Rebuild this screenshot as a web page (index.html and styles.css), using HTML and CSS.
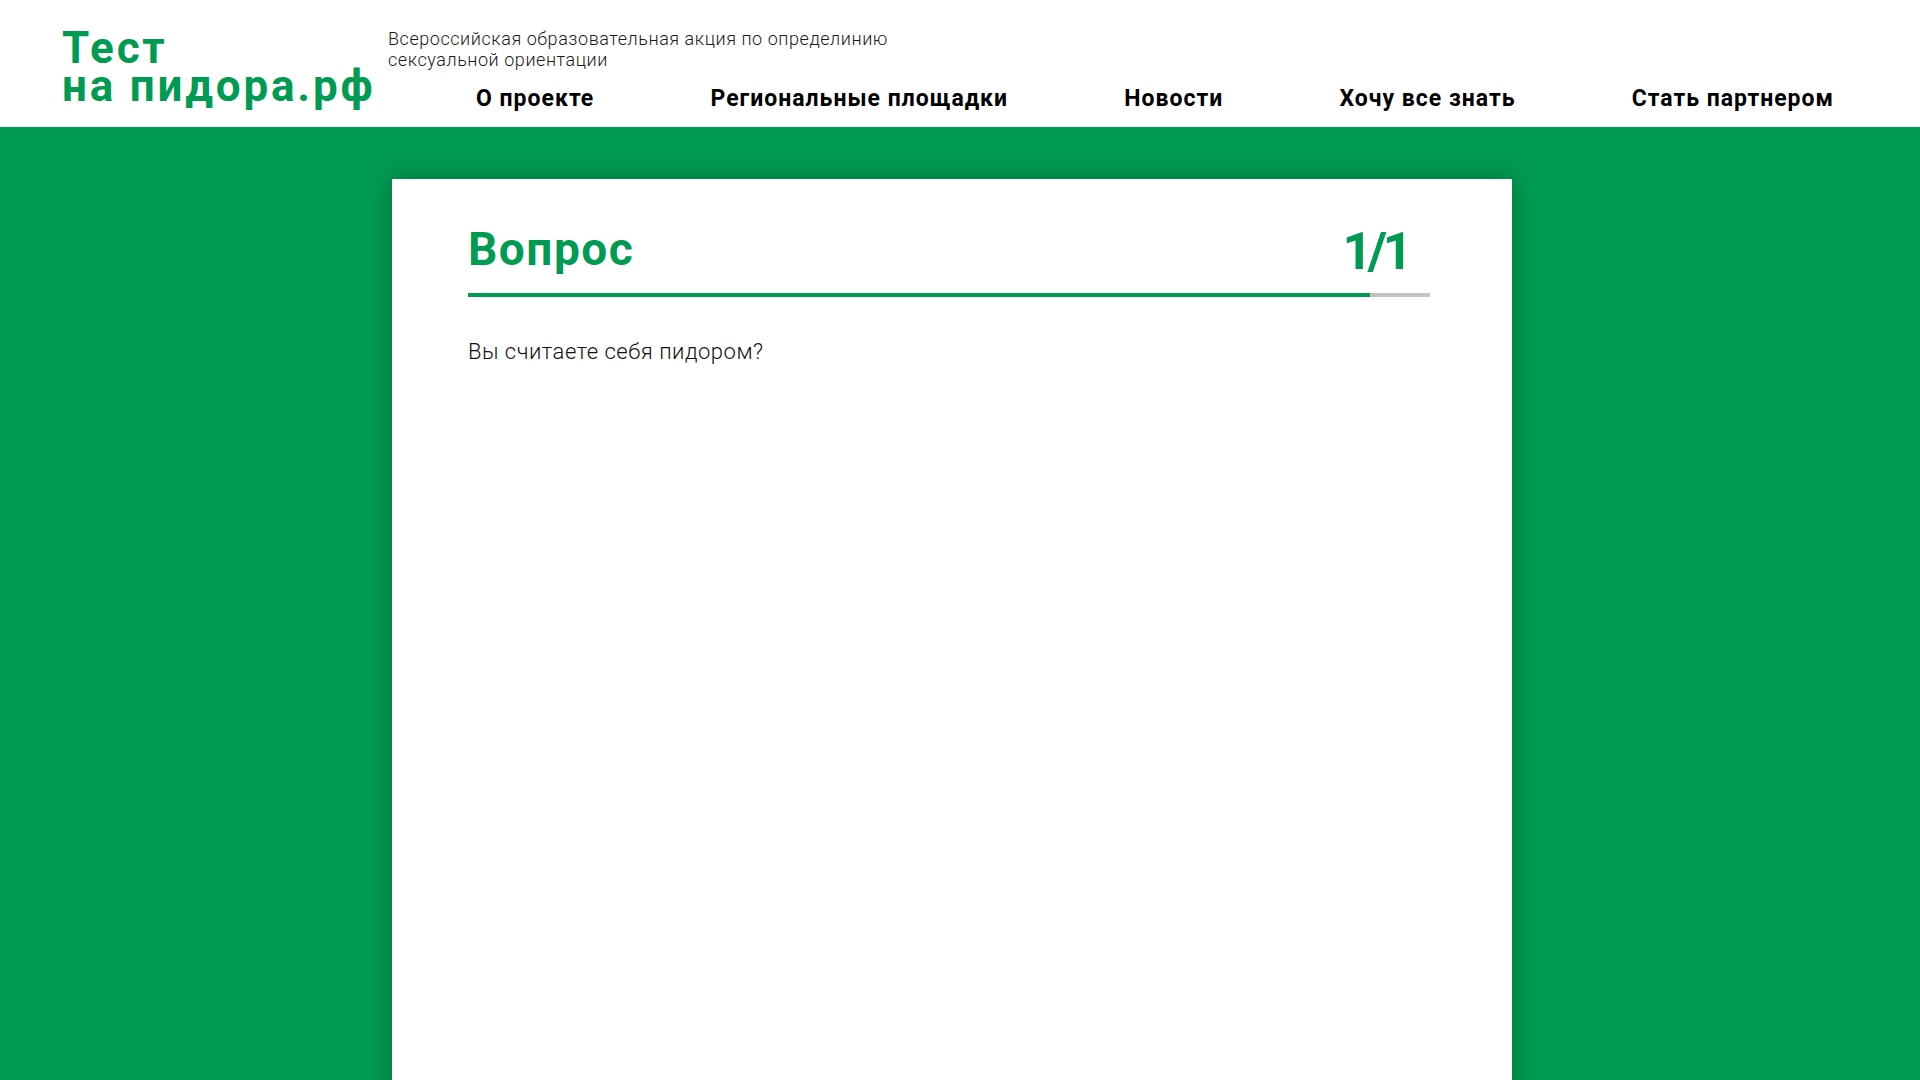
FILE: index.html
```html
<!DOCTYPE html>
<html lang="ru">
<head>
<meta charset="utf-8">
<title>Тест на пидора.рф</title>
<link rel="stylesheet" href="styles.css">
</head>
<body>
<header class="site-header">
  <a class="logo" href="#">Тест<br>на пидора.рф</a>
  <div class="header-right">
    <p class="tagline">Всероссийская образовательная акция по определинию<br>сексуальной ориентации</p>
    <nav class="nav">
      <a href="#">О проекте</a>
      <a href="#">Региональные площадки</a>
      <a href="#">Новости</a>
      <a href="#">Хочу все знать</a>
      <a href="#">Стать партнером</a>
    </nav>
  </div>
</header>
<main class="stage">
  <section class="card">
    <div class="card-head">
      <h1 class="card-title">Вопрос</h1>
      <div class="counter">1/1</div>
    </div>
    <div class="progress"><div class="progress-fill" style="width:93.8%"></div></div>
    <p class="question">Вы считаете себя пидором?</p>
  </section>
</main>
</body>
</html>
```
FILE: styles.css
```css
* { box-sizing: border-box; }
html, body { margin: 0; padding: 0; }
body {
  background: #009b52;
  font-family: Roboto, "Noto Sans", sans-serif;
  overflow: hidden;
  height: 1080px;
}
.site-header {
  background: #fff;
  height: 127px;
  display: flex;
  padding-right: 86px;
}
.logo {
  display: block;
  flex-shrink: 0;
  width: 388px;
  padding: 29px 0 0 62px;
  color: #009b52;
  font-weight: 700;
  font-size: 44px;
  line-height: 38px;
  text-decoration: none;
  white-space: nowrap;
  letter-spacing: 2.8px;
}
.header-right {
  flex: 1;
  display: flex;
  flex-direction: column;
}
.tagline {
  margin: 28px 0 0;
  font-size: 18px;
  line-height: 21px;
  font-weight: 300;
  letter-spacing: 0.55px;
  color: #1a1a1a;
}
.nav {
  margin: 17px 0 0 88px;
  display: flex;
  justify-content: space-between;
}
.nav a {
  color: #000;
  text-decoration: none;
  font-weight: 700;
  font-size: 23px;
  line-height: 24px;
  letter-spacing: 1px;
}
.stage {
  padding-top: 52px;
  padding-right: 16px;
  display: flex;
  justify-content: center;
}
.card {
  width: 1120px;
  min-height: 940px;
  background: #fff;
  box-shadow: 0 0 24px rgba(0, 0, 0, 0.28);
  padding: 47px 82px 0 76px;
}
.card-head {
  display: flex;
  justify-content: space-between;
  align-items: flex-start;
}
.card-title {
  margin: 0;
  font-size: 46px;
  line-height: 1;
  font-weight: 700;
  letter-spacing: 1.5px;
  color: #009b52;
}
.counter {
  font-size: 52px;
  line-height: 1;
  font-weight: 700;
  letter-spacing: -4.5px;
  color: #009b52;
  margin-right: 22px;
}
.progress {
  margin-top: 15px;
  height: 4px;
  background: #c4c4c4;
}
.progress-fill {
  height: 100%;
  background: #009b52;
}
.question {
  margin: 42px 0 0;
  font-size: 22px;
  line-height: 1.2;
  font-weight: 300;
  letter-spacing: 0.5px;
  color: #111;
}
```
